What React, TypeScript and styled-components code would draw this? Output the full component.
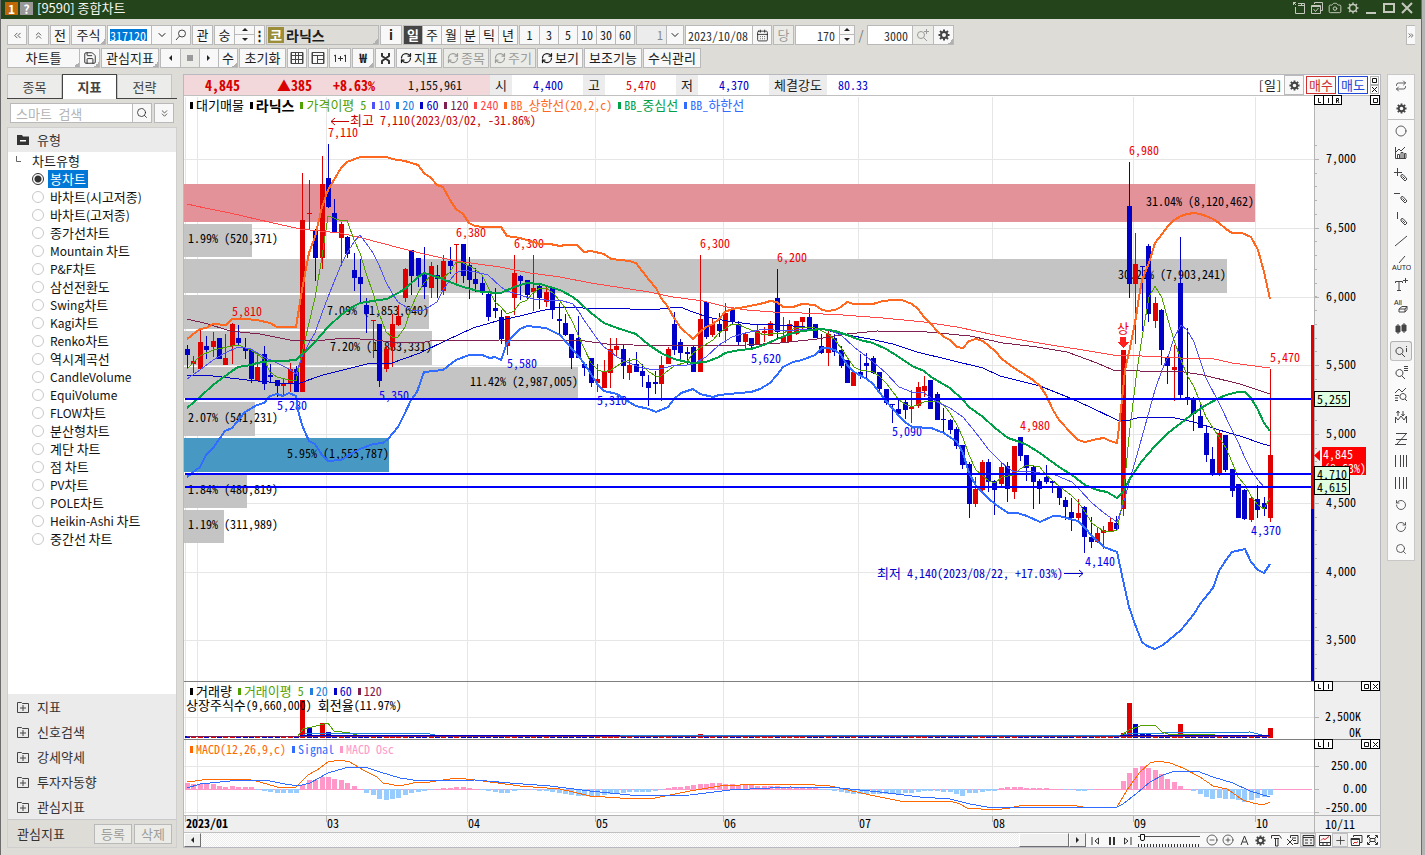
import React from "react";
import styled, { createGlobalStyle, css } from "styled-components";
import {
  ChevronDown,
  ChevronsDown,
  ChevronsLeft,
  ChevronsRight,
  ChevronsUp,
  Search,
  Save,
  RefreshCw,
  Repeat,
  CalendarDays,
  Circle,
  Camera,
  RotateCcw,
  RotateCw,
  CirclePlus,
  CircleMinus,
  Plus,
} from "lucide-react";

const UI_FONT = `"Noto Sans CJK KR", "Liberation Sans", sans-serif`;

const Global = createGlobalStyle`
  * { box-sizing: border-box; }
  body { margin: 0; background: #dddcd6; font-family: ${UI_FONT}; font-size: 13px; line-height: 16px; color: #1c1c1c; }
  button, input, select { font: inherit; color: inherit; margin: 0; padding: 0; }
`;

/* ---------- half width text ---------- */

const half = css`
  font-size: 12px;
  font-feature-settings: "hwid";
`;
const HalfSpan = styled.span`
  ${half}
  white-space: pre;
`;
const HalfTspan = styled.tspan`
  ${half}
  white-space: pre;
`;
const LatinSpan = styled.span`
  font-size: 12px;
  white-space: pre;
`;

const runs = (text: string) => text.split(/([가-힣]+)/).filter(Boolean);
const isHangul = (s: string) => /[가-힣]/.test(s);

const Mono = ({ children }: { children: string }) => (
  <>
    {runs(children).map((r, i) =>
      isHangul(r) ? <span key={i}>{r}</span> : <HalfSpan key={i}>{r}</HalfSpan>
    )}
  </>
);

const Mixed = ({ children }: { children: string }) => (
  <>
    {runs(children).map((r, i) =>
      isHangul(r) ? <span key={i}>{r}</span> : <LatinSpan key={i}>{r}</LatinSpan>
    )}
  </>
);

const ChartText = styled.text<{ $c?: string; $bold?: boolean }>`
  font-family: ${UI_FONT};
  font-size: 13px;
  font-weight: ${(p) => (p.$bold ? 700 : 400)};
  fill: ${(p) => p.$c || "#000"};
`;

type LabelProps = { x: number; y: number; c?: string; bold?: boolean; anchor?: "start" | "end"; children: string };
const Label = ({ x, y, c, bold, anchor = "start", children }: LabelProps) => (
  <ChartText x={x} y={y} $c={c} $bold={bold} textAnchor={anchor}>
    {runs(children).map((r, i) =>
      isHangul(r) ? <tspan key={i}>{r}</tspan> : <HalfTspan key={i}>{r}</HalfTspan>
    )}
  </ChartText>
);

/* ---------- window ---------- */

const Window = styled.div`
  min-height: 100vh;
  display: flex;
  flex-direction: column;
  background: #dddcd6;
  border-left: 1px solid #6c6c6c;
  border-right: 3px solid #b4b4b4;
  border-bottom: 1px solid #6c6c6c;
`;
const Inner = styled.div`
  flex: 1;
  display: flex;
  flex-direction: column;
  border-right: 1px solid #6c6c6c;
`;
const TitleBar = styled.header`
  height: 19px;
  display: flex;
  align-items: center;
  padding: 0 6px 3px 4px;
  background: #24441c;
  color: #f4f4f0;
  gap: 2px;
`;
const Tag = styled.span<{ $bg: string }>`
  width: 13px;
  height: 13px;
  line-height: 13px;
  font-size: 12px;
  font-weight: 700;
  text-align: center;
  background: ${(p) => p.$bg};
  color: #fff;
`;
const Title = styled.h1`
  margin: 0 auto 0 2px;
  font-size: 13px;
  line-height: 16px;
  font-weight: 400;
`;
const TitleBtn = styled.button`
  width: 16px;
  height: 16px;
  display: grid;
  place-items: center;
  border: 0;
  background: none;
  color: #c4c8bc;
`;

/* ---------- toolbar ---------- */

const Toolbars = styled.div`
  padding: 6px;
  display: flex;
  flex-direction: column;
  gap: 3px;
`;
const Bar = styled.div`
  display: flex;
  align-items: center;
  height: 20px;
  gap: 1px;
`;
const Group = styled.div`
  display: flex;
  > * + * {
    margin-left: -1px;
  }
`;
const Btn = styled.button<{ $w: number; $on?: boolean; $off?: boolean; $corner?: boolean; $bold?: boolean }>`
  width: ${(p) => p.$w}px;
  height: 20px;
  flex: none;
  display: flex;
  align-items: center;
  justify-content: center;
  gap: 2px;
  border: 1px solid #b9b9b9;
  white-space: nowrap;
  line-height: 16px;
  font-weight: ${(p) => (p.$on || p.$bold ? 700 : 400)};
  color: ${(p) => (p.$on ? "#fff" : p.$off ? "#9c9c98" : "#1c1c1c")};
  background: ${(p) => (p.$on ? "#444" : p.$off ? "#ebebe8" : "#f8f8f8")};
  ${(p) =>
    p.$corner &&
    css`
      background: linear-gradient(135deg, transparent 50%, #b0b0b0 50%) right bottom / 5px 5px no-repeat, #f8f8f8;
    `}
`;
const Field = styled.input<{ $w: number; $right?: boolean }>`
  width: ${(p) => p.$w}px;
  height: 20px;
  ${half}
  border: 1px solid #b9b9b9;
  border-radius: 0;
  padding: 0 4px 0 2px;
  background: #fff;
  color: #333;
  text-align: ${(p) => (p.$right ? "right" : "left")};
`;
const CodeField = styled(Field)`
  background: linear-gradient(#0078d7, #0078d7) 2px 3px / 37px 12px no-repeat, #fff;
  color: #fff;
`;
const CountSelect = styled.select`
  width: 31px;
  height: 20px;
  appearance: none;
  border: 1px solid #b9b9b9;
  border-radius: 0;
  background: #ececec;
  color: #888;
  padding: 0 3px 0 20px;
  ${half}
`;
const Slash = styled.span`
  width: 10px;
  text-align: center;
  color: #777;
`;
const StockName = styled.button`
  width: 113px;
  height: 20px;
  display: flex;
  align-items: center;
  gap: 2px;
  padding-left: 1px;
  border: 1px solid #b9b9b9;
  font-size: 14px;
  font-weight: 700;
  background: linear-gradient(135deg, transparent 50%, #b0b0b0 50%) right bottom / 5px 5px no-repeat, #dddcd6;
`;
const Market = styled.span`
  width: 16px;
  height: 16px;
  line-height: 16px;
  font-size: 13px;
  text-align: center;
  color: #fff;
  background: #9c8e38;
`;
const Spin = styled.div<{ $w: number }>`
  width: ${(p) => p.$w}px;
  height: 20px;
  display: flex;
  flex-direction: column;
`;
const SpinBtn = styled.button`
  height: 10px;
  display: grid;
  place-items: center;
  border: 1px solid #b9b9b9;
  background: #f8f8f8;
  & + & {
    border-top: 0;
  }
`;
const MoreBtn = styled(Btn)`
  margin-left: auto;
  border-right: 0;
`;

const Tri = ({ dir }: { dir: "up" | "down" | "left" | "right" }) => {
  const d = { up: "M0 4L3 1L6 4Z", down: "M0 1L3 4L6 1Z", left: "M4 0L1 3L4 6Z", right: "M1 0L4 3L1 6Z" }[dir];
  return (
    <svg width="6" height="6" fill="#222" aria-hidden="true">
      <path d={d} />
    </svg>
  );
};
const Gear = ({ s = 12, c = "#444", thin }: { s?: number; c?: string; thin?: boolean }) => (
  <svg width={s} height={s} viewBox="0 0 12 12" aria-hidden="true" fill="none" stroke={c}>
    <circle cx="6" cy="6" r={thin ? 3.5 : 3} strokeWidth={thin ? 1.5 : 2} />
    <path
      strokeWidth={thin ? 1.5 : 2}
      d="M6 0.500V2.500M6 9.500V11.500M0.500 6H2.500M9.500 6H11.500M2 2L3.400 3.400M8.600 8.600L10 10M10 2L8.600 3.400M3.400 8.600L2 10"
    />
  </svg>
);
const SpinPair = ({ w }: { w: number }) => (
  <Spin $w={w}>
    <SpinBtn aria-label="증가">
      <Tri dir="up" />
    </SpinBtn>
    <SpinBtn aria-label="감소">
      <Tri dir="down" />
    </SpinBtn>
  </Spin>
);
const strokeIcon = (d: string, size = 13, color = "#333", width = 1) => (
  <svg width={size} height={size} fill="none" stroke={color} strokeWidth={width} aria-hidden="true">
    <path d={d} />
  </svg>
);

const MainToolbar = () => (
  <Bar>
    <Btn $w={20} aria-label="이전"><ChevronsLeft size={11} strokeWidth={1.5} /></Btn>
    <Btn $w={21} aria-label="위로"><ChevronsUp size={11} strokeWidth={1.5} /></Btn>
    <Btn $w={20}>전</Btn>
    <Btn $w={35} $corner>주식</Btn>
    <Group>
      <CodeField $w={45} aria-label="종목코드" defaultValue="317120" />
      <Btn $w={21} aria-label="종목 목록"><ChevronDown size={12} /></Btn>
      <Btn $w={20} aria-label="종목 검색">
        <svg width="12" height="12" fill="none" stroke="#444" aria-hidden="true">
          <circle cx="7" cy="4.500" r="3.500" />
          <path d="M4.500 7L1 11" />
        </svg>
      </Btn>
    </Group>
    <Btn $w={21}>관</Btn>
    <Group>
      <Btn $w={21}>숭</Btn>
      <SpinPair w={21} />
      <Btn $w={11} $bold>⋮</Btn>
    </Group>
    <StockName>
      <Market>코</Market>라닉스
    </StockName>
    <Btn $w={22} $bold>i</Btn>
    <Group>
      {["일", "주", "월", "분", "틱", "년"].map((t, i) => (
        <Btn key={t} $w={20} $on={i === 0}>{t}</Btn>
      ))}
    </Group>
    <Group>
      {["1", "3", "5", "10", "30", "60"].map((t, i) => (
        <Btn key={t} $w={i === 0 ? 21 : 20}><Mono>{t}</Mono></Btn>
      ))}
    </Group>
    <Group>
      <CountSelect aria-label="주기 값" defaultValue="1"><option>1</option></CountSelect>
      <Btn $w={18} aria-label="주기 값 펼치기"><ChevronDown size={12} /></Btn>
    </Group>
    <Group>
      <Field $w={68} aria-label="기준일" defaultValue="2023/10/08" />
      <Btn $w={20} aria-label="달력"><CalendarDays size={13} strokeWidth={1.5} /></Btn>
    </Group>
    <Btn $w={21} $off>당</Btn>
    <Group>
      <Field $w={45} $right aria-label="표시 개수" defaultValue="170" />
      <SpinPair w={16} />
    </Group>
    <Slash>/</Slash>
    <Group>
      <Field $w={46} $right aria-label="전체 개수" defaultValue="3000" />
      <Btn $w={22} $off aria-label="조회">
        <svg width="14" height="14" fill="none" stroke="#999" aria-hidden="true">
          <circle cx="5" cy="7" r="3.500" />
          <path d="M7.500 9.500L11 13M8 3.500H13M10.500 1V6" />
        </svg>
      </Btn>
      <Btn $w={21} $corner aria-label="설정"><Gear /></Btn>
    </Group>
    <MoreBtn $w={9} aria-label="더보기"><ChevronsRight size={9} /></MoreBtn>
  </Bar>
);

const Cycle = () => <RefreshCw size={12} strokeWidth={2.5} />;

const ChartToolbar = () => (
  <Bar>
    <Group>
      <Btn $w={73} $corner>차트틀</Btn>
      <Btn $w={21} $corner aria-label="저장"><Save size={14} strokeWidth={1.5} /></Btn>
    </Group>
    <Btn $w={58} $corner>관심지표</Btn>
    <Group>
      <Btn $w={21} aria-label="뒤로"><Tri dir="left" /></Btn>
      <Btn $w={20} $off aria-label="정지">
        <svg width="6" height="6" fill="#999" aria-hidden="true"><path d="M0 0H6V6H0Z" /></svg>
      </Btn>
      <Btn $w={20} aria-label="앞으로"><Tri dir="right" /></Btn>
      <Btn $w={20} $corner>수</Btn>
    </Group>
    <Btn $w={47}>초기화</Btn>
    <Btn $w={20} aria-label="표">
      {strokeIcon("M1 1.500H13V12.500H1ZM1 4.500H13M1 8.500H13M1.500 1V13M5.500 1.500V12.500M8.500 1.500V12.500M12.500 1V13", 14, "#444")}
    </Btn>
    <Btn $w={20} aria-label="분할">
      {strokeIcon("M1 1.500H13V12.500H1ZM1 4.500H13M1.500 1V13M12.500 1V13M6.500 4.500V12.500M6.500 8.500H12.500", 14, "#444")}
    </Btn>
    <Btn $w={22} aria-label="추가 분할">
      {strokeIcon("M1 5L2.500 4V11M11 5L12.500 4V11M5 7.500H10M7.500 5V10", 14)}
    </Btn>
    <Btn $w={22} $corner $bold>₩</Btn>
    <Btn $w={20} aria-label="도구">
      {strokeIcon("M3 1V4L10 9V12M10 1V4L3 9V12M5 6.500H8", 13, "#333", 2)}
    </Btn>
    <Btn $w={46}><Cycle />지표</Btn>
    <Btn $w={46} $off><Cycle />종목</Btn>
    <Btn $w={46} $off><Cycle />주기</Btn>
    <Btn $w={46}><Cycle />보기</Btn>
    <Btn $w={58}>보조기능</Btn>
    <Btn $w={58}>수식관리</Btn>
  </Bar>
);

/* ---------- side panel ---------- */

const Body = styled.div`
  flex: 1;
  display: grid;
  grid-template-columns: 170px minmax(0, 1fr) 28px;
  align-items: start;
  gap: 6px;
  padding: 0 6px 7px;
`;
const Side = styled.aside`
  align-self: stretch;
  display: flex;
  flex-direction: column;
`;
const Tabs = styled.div`
  display: flex;
  height: 25px;
  border-bottom: 1px solid #444;
`;
const Tab = styled.button<{ $on?: boolean }>`
  width: 55px;
  height: ${(p) => (p.$on ? 25 : 24)}px;
  border: 1px solid ${(p) => (p.$on ? "#444" : "#c4c4c4")};
  border-bottom: 0;
  background: ${(p) => (p.$on ? "#fff" : "#ececea")};
  font-weight: ${(p) => (p.$on ? 700 : 400)};
  color: #444;
`;
const SearchRow = styled.div`
  display: flex;
  height: 28px;
  padding: 4px 3px 4px 3px;
`;
const SearchField = styled(Field)`
  flex: 1;
  min-width: 0;
  padding-left: 5px;
  font-size: 13px;
  &::placeholder {
    color: #b4b4b4;
    opacity: 1;
  }
`;
const SearchBtn = styled(Btn)`
  margin-left: -1px;
`;
const FoldBtn = styled(Btn)`
  margin-left: 2px;
`;
const TreePanel = styled.div`
  flex: 1;
  display: flex;
  flex-direction: column;
  border: 1px solid #cfcfcf;
  background: #fff;
`;
const SectionBtn = styled.button<{ $open?: boolean }>`
  height: ${(p) => (p.$open ? 24 : 25)}px;
  display: flex;
  align-items: center;
  gap: 8px;
  padding: 0 9px;
  border: 0;
  background: #ebebeb;
  color: #333;
`;
const Tree = styled.fieldset`
  flex: 1;
  margin: 0;
  border: 0;
  padding: 0 0 0 24px;
`;
const TreeHead = styled.legend`
  height: 18px;
  line-height: 18px;
  margin-left: -16px;
  padding: 0;
  display: flex;
  gap: 11px;
`;
const Item = styled.label`
  height: 18px;
  display: flex;
  align-items: center;
  gap: 4px;
`;
const Radio = styled.input`
  appearance: none;
  width: 12px;
  height: 12px;
  border: 1px solid #c8c8c8;
  border-radius: 50%;
  background: #fff;
  &:checked {
    border-color: #333;
    background: radial-gradient(#333 0 3px, #fff 4px);
  }
`;
const ItemText = styled.span<{ $on?: boolean }>`
  padding: 0 2px;
  line-height: 18px;
  white-space: pre;
  color: ${(p) => (p.$on ? "#fff" : "#111")};
  background: ${(p) => (p.$on ? "#0078d7" : "none")};
`;
const SideFoot = styled.div`
  height: 28px;
  display: flex;
  align-items: center;
  gap: 2px;
  padding: 0 4px 0 9px;
  border-top: 1px solid #c8c8c8;
  background: #dddcd6;
  color: #333;
  > span {
    margin-right: auto;
  }
`;

const chartTypes = [
  "봉차트", "바차트(시고저종)", "바차트(고저종)", "종가선차트", "Mountain 차트", "P&F차트", "삼선전환도",
  "Swing차트", "Kagi차트", "Renko차트", "역시계곡선", "CandleVolume", "EquiVolume", "FLOW차트",
  "분산형차트", "계단 차트", "점 차트", "PV차트", "POLE차트", "Heikin-Ashi 차트", "중간선 차트",
];

const FolderIcon = ({ open }: { open?: boolean }) => (
  <svg width="12" height="12" fill={open ? "#333" : "none"} stroke={open ? "none" : "#444"} aria-hidden="true">
    <path d={open ? "M0 1H5L6 2.500H12V11H0Z" : "M0.500 1.500H4.500L5.500 2.500H11.500V11.500H0.500Z"} />
    <path d={open ? "M3 6H9V7.500H3Z" : "M3 7H9M6 4V10"} fill={open ? "#fff" : "none"} />
  </svg>
);

const SidePanel = () => (
  <Side>
    <Tabs role="tablist">
      <Tab role="tab">종목</Tab>
      <Tab role="tab" aria-selected="true" $on>지표</Tab>
      <Tab role="tab">전략</Tab>
    </Tabs>
    <SearchRow>
      <SearchField $w={120} aria-label="스마트 검색" placeholder="스마트 검색" />
      <SearchBtn $w={20} aria-label="검색"><Search size={12} strokeWidth={1.5} /></SearchBtn>
      <FoldBtn $w={20} aria-label="접기"><ChevronsDown size={11} strokeWidth={1.5} /></FoldBtn>
    </SearchRow>
    <TreePanel>
      <SectionBtn $open><FolderIcon open />유형</SectionBtn>
      <Tree>
        <TreeHead>
          <svg width="5" height="10" fill="none" stroke="#666" aria-hidden="true"><path d="M0.500 4V9.500H5" /></svg>
          차트유형
        </TreeHead>
        {chartTypes.map((t, i) => (
          <Item key={t}>
            <Radio type="radio" name="chartType" defaultChecked={i === 0} />
            <ItemText $on={i === 0}><Mixed>{t}</Mixed></ItemText>
          </Item>
        ))}
      </Tree>
      {["지표", "신호검색", "강세약세", "투자자동향", "관심지표"].map((t) => (
        <SectionBtn key={t}><FolderIcon />{t}</SectionBtn>
      ))}
      <SideFoot>
        <span>관심지표</span>
        <Btn $w={38} $off>등록</Btn>
        <Btn $w={38} $off>삭제</Btn>
      </SideFoot>
    </TreePanel>
  </Side>
);

/* ---------- chart data ---------- */

const RED = "#e00000";
const BLUE = "#0000c8";

// high, low, body top, body bottom on the price pane; a leading minus marks a falling candle
const candles: number[][] = [
  [-345,368,349,355],[356,373,361,364],[330,369,342,369],[-336,359,346,350],[332,357,341,347],[-338,359,338,359],
  [334,365,358,365],[323,364,324,346],[-325,346,338,343],[-338,359,348,351],[-350,383,350,379],[353,381,367,381],
  [-346,390,354,384],[-364,382,375,377],[-380,397,380,386],[378,395,383,386],[363,392,369,383],[-366,392,369,392],
  [173,392,220,392],[180,230,213,214],[-229,281,231,258],[156,269,184,258],[-144,208,178,207],[-199,233,213,233],
  [222,266,224,238],[-236,258,237,254],[-253,291,270,278],[-259,302,277,284],[-298,333,305,314],[320,358,320,321],
  [-324,387,324,381],[346,372,349,369],[314,367,324,347],[305,326,316,325],[268,302,269,298],[-250,295,250,276],
  [-258,287,258,276],[-247,299,275,287],[262,298,266,288],[-265,298,275,279],[255,295,261,291],[-247,274,261,266],
  [244,283,244,245],[-244,283,244,276],[-257,299,265,280],[-268,292,279,284],[-275,295,283,293],[-293,321,294,317],
  [-288,318,308,311],[-310,344,317,339],[316,355,316,346],[255,315,273,298],[-275,300,276,281],[-280,299,280,295],
  [255,311,288,292],[-285,309,286,298],[287,307,292,302],[-288,319,288,310],[-303,335,319,321],[-314,336,323,335],
  [-334,369,334,358],[-316,358,338,358],[-364,376,364,368],[-358,387,358,383],[364,392,379,383],[360,388,372,388],
  [338,388,349,373],[338,357,346,350],[-345,379,349,366],[358,380,365,373],[-352,372,364,372],[-364,387,371,376],
  [-375,406,382,388],[-371,394,382,384],[356,401,365,384],[347,364,349,364],[-312,355,324,350],[-339,359,342,353],
  [-347,365,352,354],[-346,372,347,372],[255,372,319,372],[-301,339,302,337],[319,337,324,335],[-313,337,324,331],
  [303,343,313,331],[-307,324,310,321],[-321,345,324,342],[332,348,334,342],[-338,349,338,346],[325,345,331,345],
  [327,342,331,333],[321,336,323,336],[-269,338,298,332],[317,343,336,342],[320,342,324,342],[321,335,321,334],
  [317,331,317,322],[-308,329,317,329],[-324,338,324,338],[-334,354,346,353],[330,366,334,353],[-334,356,338,352],
  [-346,368,350,366],[-360,383,360,383],[371,386,372,386],[-354,379,372,375],[-353,379,363,366],[-356,374,358,373],
  [-372,392,372,389],[-389,405,389,403],[-404,423,404,405],[-398,417,409,414],[-400,419,402,410],[390,423,407,409],
  [382,408,387,406],[376,397,386,391],[-380,409,380,409],[-392,420,394,420],[-408,432,419,420],[-419,434,420,430],
  [-427,449,429,446],[-445,469,445,465],[-462,518,464,504],[477,507,489,504],[460,491,462,490],[-459,492,462,482],
  [-480,515,481,490],[463,486,467,484],[-462,502,466,489],[446,499,446,492],[-437,461,437,456],[-455,481,455,468],
  [-466,509,467,482],[-479,504,481,489],[-465,484,477,482],[-480,493,481,483],[-487,505,487,498],[-497,520,500,507],
  [-498,531,512,518],[499,520,513,518],[-506,553,507,537],[-517,548,537,542],[528,543,533,542],[526,549,530,533],
  [518,531,522,531],[-516,530,523,529],[350,516,350,509],[-162,298,206,284],[233,344,264,284],[-266,331,266,267],
  [-244,322,246,314],[297,328,303,321],[-309,365,310,350],[-356,384,358,366],[345,401,367,370],[-237,398,283,395],
  [-328,405,397,399],[-397,431,398,414],[-404,428,416,428],[-425,462,433,455],[-447,476,459,475],[430,476,433,474],
  [-435,472,435,470],[-469,497,469,491],[-484,518,484,518],[-489,520,490,519],[496,522,498,520],[-485,518,499,510],
  [-497,516,503,509],[369,522,455,518],
];
const STEP = 1083 / 169;
const barX = (i: number) => Math.round(185 + i * STEP);

const lines: { c: string; w: number; p: string }[] = [
  { c: "#ff4848", w: 1, p: "187,204 205,208 230,213 260,220 300,229 340,233 362,238 400,248 424,254 456,261 500,267 530,273 560,277 591,283 623,288 649,292 673,297 703,301 727,307 747,310 773,312 802,313 843,315 883,318 924,322 957,327 995,335 1027,341 1057,346 1083,350 1113,355 1142,356 1181,358 1210,358 1232,363 1270,368" },
  { c: "#802050", w: 1, p: "187,319 208,324 230,331 260,334 290,340 315,341 345,338 375,340 400,343 425,342 435,340 460,341 500,340 530,341 560,340 585,341 607,344 633,345 690,346 747,345 780,343 817,339 847,334 877,331 927,332 970,336 1003,343 1037,347 1067,352 1097,363 1113,370 1140,371 1177,371 1203,375 1240,384 1270,394" },
  { c: BLUE, w: 1, p: "187,375 213,376 247,380 280,383 300,383 323,375 347,369 367,364 392,363 420,353 447,340 473,328 497,321 520,316 540,311 560,307 583,308 610,308 650,310 680,307 693,312 707,317 727,321 750,324 767,324 793,326 817,328 847,335 870,339 893,344 917,352 950,360 983,368 1000,376 1040,386 1070,398 1090,407 1117,420 1130,420 1140,417 1170,417 1194,422 1219,430 1243,437 1260,443 1270,446" },
  { c: "#50a000", w: 1, p: "187,369 200,356 213,350 232,346 238,345 251,350 257,354 264,359 270,372 277,377 289,380 296,381 302,353 309,323 315,298 322,257 328,216 334,218 341,221 347,220 354,240 360,253 366,273 373,293 379,313 386,332 392,337 398,337 405,327 411,308 418,293 424,283 431,275 443,278 450,272 456,262 463,263 475,269 482,275 488,287 495,302 501,307 507,314 514,311 520,303 527,300 533,293 540,288 546,288 553,293 560,301 565,308 573,323 579,337 584,348 591,363 598,370 604,372 611,370 623,362 636,359 642,365 649,372 656,376 661,376 674,366 687,362 693,353 700,348 713,340 719,333 732,324 739,325 751,330 764,335 777,333 783,333 796,328 809,327 815,328 822,331 828,334 835,340 841,348 847,357 854,367 860,370 873,372 879,376 886,383 893,392 899,400 905,404 912,407 924,402 937,401 944,405 950,413 957,425 963,438 969,455 976,470 983,476 989,481 995,483 1002,477 1014,475 1020,469 1027,465 1040,467 1046,475 1059,486 1072,496 1078,502 1085,512 1092,523 1097,527 1104,531 1110,532 1117,530 1123,500 1129,437 1137,370 1142,338 1149,297 1155,286 1162,298 1168,320 1174,340 1181,360 1187,375 1194,387 1200,402 1206,417 1213,428 1219,437 1226,448 1232,462 1238,477 1245,485 1251,496 1258,505 1264,509 1270,498" },
  { c: "#5050f8", w: 1, p: "187,379 200,370 213,360 225,353 238,347 251,349 264,357 277,363 289,369 296,374 302,357 309,343 315,333 322,313 328,297 334,282 341,265 347,253 354,242 360,235 366,243 373,253 379,265 386,282 392,293 398,302 411,310 424,310 437,302 443,290 450,280 456,273 463,270 475,272 488,275 501,287 507,291 520,295 533,299 546,300 560,300 573,304 579,312 584,320 591,330 598,340 604,347 611,352 617,357 629,363 642,368 656,370 668,367 674,365 681,366 693,364 706,357 719,345 732,337 745,333 764,329 783,331 809,329 828,330 841,335 854,347 867,357 879,367 886,373 899,387 912,392 924,393 937,402 950,408 963,417 976,433 989,450 1002,463 1014,472 1027,471 1040,473 1053,474 1067,480 1072,482 1078,488 1092,503 1104,513 1117,522 1123,505 1129,483 1142,437 1155,390 1162,370 1168,357 1174,338 1181,325 1187,330 1194,342 1200,360 1206,378 1219,403 1232,430 1238,442 1245,458 1251,470 1258,480 1264,487" },
  { c: "#00a048", w: 2, p: "187,408 200,397 213,385 232,371 238,367 251,365 257,363 270,361 283,361 296,360 309,348 315,342 328,327 341,315 354,306 360,303 379,300 387,299 398,293 405,289 418,277 424,273 437,277 450,282 463,287 482,292 501,293 514,287 527,283 540,284 560,290 573,297 579,302 591,313 604,323 617,328 636,334 649,345 661,353 674,359 687,362 693,363 706,362 719,357 725,353 739,350 751,349 764,345 777,339 790,334 802,331 822,329 835,331 847,335 860,340 873,343 886,349 899,357 912,366 924,371 931,377 950,388 963,400 969,407 983,417 995,428 1008,438 1020,442 1027,445 1040,453 1059,467 1072,475 1085,485 1097,490 1107,492 1117,498 1123,492 1129,480 1142,461 1155,446 1168,433 1181,423 1194,413 1206,405 1219,398 1226,395 1238,392 1245,392 1251,398 1258,410 1264,423 1270,431" },
  { c: "#ff6820", w: 2, p: "187,339 200,329 206,328 213,324 226,325 232,319 245,319 257,320 270,323 277,327 296,327 302,290 309,253 315,237 322,207 328,190 341,168 347,162 360,157 387,157 392,159 405,161 418,165 424,173 431,178 437,185 443,187 450,200 456,209 463,214 469,223 475,226 483,227 501,227 507,236 520,238 533,242 540,244 550,244 560,246 565,245 577,245 584,252 591,251 604,254 611,259 629,261 636,263 649,280 656,288 661,298 668,307 674,318 681,328 693,339 700,332 706,327 713,324 719,319 725,312 732,309 745,307 764,303 770,301 777,302 783,307 793,307 802,304 815,305 822,310 828,311 835,310 841,307 847,302 854,304 873,304 883,301 893,300 902,300 912,304 918,309 924,317 931,324 937,331 944,337 950,340 957,347 963,348 969,341 976,339 983,341 989,346 995,351 1002,359 1014,368 1027,376 1033,380 1040,386 1046,395 1053,410 1059,420 1072,434 1078,440 1085,442 1097,439 1104,438 1110,441 1117,443 1119,427 1123,390 1125,370 1131,343 1136,317 1139,297 1142,280 1149,263 1155,243 1162,234 1168,226 1174,220 1181,216 1187,214 1194,213 1200,214 1206,216 1213,219 1219,223 1226,229 1232,233 1242,233 1251,237 1258,250 1264,272 1270,299" },
  { c: "#2f6cff", w: 2, p: "187,477 200,467 206,455 213,448 225,431 232,428 245,412 257,405 264,403 270,396 277,394 283,396 289,393 296,396 298,410 302,425 309,441 315,444 322,455 328,461 341,460 354,452 360,449 373,444 383,443 388,439 398,427 405,413 411,400 417,392 424,372 443,370 456,360 469,355 482,355 490,358 495,357 501,360 507,343 514,335 520,329 527,326 546,328 560,335 573,350 579,357 584,363 591,374 598,385 604,391 617,394 629,402 636,406 649,409 656,412 668,407 674,399 681,393 693,389 700,394 713,397 719,395 739,393 751,392 760,389 770,383 777,375 783,367 793,362 802,360 815,355 822,348 828,348 835,350 841,355 847,365 854,372 867,379 873,384 886,401 899,416 905,422 912,427 931,428 944,433 957,442 963,453 969,473 976,486 989,499 995,504 1008,513 1017,513 1027,516 1040,522 1053,516 1059,516 1078,521 1085,528 1092,536 1104,547 1117,552 1123,580 1129,607 1136,627 1142,642 1147,646 1155,649 1163,645 1181,630 1194,614 1200,604 1213,588 1219,571 1226,560 1232,552 1245,549 1251,562 1258,570 1264,573 1270,564" },
];

const macdLines = [
  { c: "#ff6800", p: "187,782 210,779 247,779 260,782 277,787 295,788 300,783 308,775 317,770 328,762 340,760 350,762 363,770 377,777 383,783 400,786 413,783 430,782 443,780 457,778 475,780 520,786 560,789 590,796 620,798 650,799 690,791 720,786 760,784 800,784 830,786 870,795 900,801 930,802 950,801 960,804 967,808 995,810 1010,808 1023,805 1070,805 1090,808 1117,807 1127,790 1140,772 1150,763 1158,761 1170,763 1183,768 1200,777 1213,786 1227,789 1243,800 1253,803 1263,805 1270,802" },
  { c: "#2f6cff", p: "187,788 200,784 220,782 240,780 265,780 285,784 298,786 310,783 328,773 345,768 365,767 380,772 400,778 420,781 475,780 510,783 550,786 590,791 640,796 690,795 730,790 790,787 840,788 880,792 920,797 950,799 970,804 987,807 1023,807 1117,807 1123,804 1137,793 1150,782 1163,775 1175,771 1197,771 1213,777 1233,783 1250,791 1270,797" },
];
const oscillator = [
  6,5,5,5,5,3,2,3,2,2,2,-1,-2,-3,-4,-4,-4,-4,4,9,9,12,12,10,9,6,3,0,-4,-6,-10,-11,-10,-9,-6,-4,-3,-2,-1,0,1,1,2,2,1,
  0,-1,-2,-3,-4,-4,-2,-1,-1,-1,-2,-2,-3,-4,-5,-6,-7,-7,-8,-7,-6,-5,-4,-4,-3,-3,-3,-3,-2,-1,1,2,2,3,4,5,5,6,6,5,5,4,4,
  4,3,3,3,3,2,2,2,2,1,1,-1,-1,-2,-3,-4,-5,-5,-5,-5,-5,-5,-5,-5,-4,-4,-3,-2,-2,-2,-3,-3,-5,-7,-4,-4,-3,-2,-2,1,2,2,2,
  1,1,1,1,0,0,-1,-1,-2,-2,-1,8,16,21,23,21,19,15,10,7,3,0,-2,-5,-8,-10,-9,-10,-10,-11,-13,-11,-9,-8,-6,
];
// the last 24 values belong to the newest candles, so the series is aligned to the right
const oscillatorAt = (i: number) =>
  i >= 146 ? oscillator[oscillator.length - 170 + i] : i < oscillator.length - 24 ? oscillator[i] : 0;

const tallVolume: Record<number, [number, string]> = {
  18: [38, RED], 19: [10, BLUE], 20: [3, BLUE], 21: [15, RED], 22: [6, BLUE], 80: [4, RED],
  146: [5, RED], 147: [35, RED], 148: [14, BLUE], 149: [5, BLUE], 150: [4, BLUE], 155: [14, RED], 156: [4, BLUE], 169: [10, RED],
};
const volumeLines = [
  { c: "#50a000", p: "187,736 298,736 303,729 312,727 328,723 334,731 350,733 360,736 1120,736 1129,730 1140,726 1155,725 1162,732 1168,734 1210,734 1220,736 1270,735" },
  { c: "#2080e0", p: "187,736 300,736 308,733 425,733 435,735 1120,736 1128,734 1165,733 1250,732 1262,735 1270,735" },
  { c: BLUE, p: "187,736 300,736 500,735 620,736 1120,736 1140,735 1270,735" },
  { c: "#802050", p: "187,736 1270,736" },
];

const profile: [number, number, number, string, string, number, number][] = [
  [184, 38, 1255, "#e4929a", "31.04% (8,120,462)", 1254, 206],
  [224, 33, 252, "#c4c4c4", "1.99% (520,371)", 278, 243],
  [259, 34, 1227, "#c4c4c4", "30.21% (7,903,241)", 1226, 279],
  [295, 34, 429, "#c4c4c4", "7.09% (1,853,640)", 429, 315],
  [331, 34, 432, "#c4c4c4", "7.20% (1,883,331)", 432, 351],
  [367, 31, 578, "#c4c4c4", "11.42% (2,987,005)", 578, 386],
  [402, 34, 255, "#c4c4c4", "2.07% (541,231)", 278, 422],
  [438, 34, 389, "#4898c4", "5.95% (1,555,787)", 389, 458],
  [475, 33, 247, "#c4c4c4", "1.84% (480,819)", 278, 494],
  [510, 33, 224, "#c4c4c4", "1.19% (311,989)", 278, 529],
];
const priceTags: [string, number, number, string][] = [
  ["7,110", 328, 137, "#f00000"], ["5,810", 232, 316, "#f00000"], ["5,280", 277, 410, "#0000f0"],
  ["6,380", 456, 237, "#f00000"], ["6,300", 514, 248, "#f00000"], ["5,580", 507, 368, "#0000f0"],
  ["5,350", 379, 400, "#0000f0"], ["5,310", 597, 405, "#0000f0"], ["6,300", 700, 248, "#f00000"],
  ["6,200", 777, 262, "#f00000"], ["5,620", 751, 363, "#0000f0"], ["5,090", 892, 436, "#0000f0"],
  ["4,980", 1020, 430, "#f00000"], ["4,140", 1085, 566, "#0000f0"], ["6,980", 1129, 155, "#f00000"],
  ["5,470", 1270, 362, "#f00000"],
];
const gridX = [185, 197, 326, 467, 595, 723, 858, 992, 1133, 1255];
const gridY = [159, 228, 297, 365, 434, 503, 572, 640];
const priceAxis = ["7,000", "6,500", "6,000", "5,500", "5,000", "4,500", "4,000", "3,500"];
const months: [string, number][] = [
  ["03", 327], ["04", 468], ["05", 596], ["06", 724], ["07", 859], ["08", 993], ["09", 1134], ["10", 1256],
];

/* ---------- chart ---------- */

const ChartPanel = styled.main`
  border: 1px solid #b8b8c0;
  background: #fff;
`;
const QuoteRow = styled.div`
  height: 21px;
  display: flex;
  align-items: center;
  border-bottom: 1px solid #c0c0c0;
`;
const Quote = styled.span<{ $w: number; $c?: string; $bold?: boolean; $pad?: number }>`
  width: ${(p) => p.$w}px;
  height: 20px;
  line-height: 20px;
  padding-right: ${(p) => p.$pad || 0}px;
  text-align: right;
  white-space: nowrap;
  font-feature-settings: "hwid";
  font-size: ${(p) => (p.$bold ? 14 : 12)}px;
  font-weight: ${(p) => (p.$bold ? 700 : 400)};
  color: ${(p) => p.$c || "#111"};
`;
const PinkQuotes = styled.div`
  display: flex;
  width: 306px;
  background: #f2d8da;
`;
const QuoteName = styled.span<{ $w: number }>`
  width: ${(p) => p.$w}px;
  height: 20px;
  line-height: 20px;
  text-align: center;
  background: #ececec;
`;
const QuoteTools = styled.div`
  margin-left: auto;
  display: flex;
  align-items: center;
  gap: 2px;
  padding-right: 1px;
`;
const TradeBtn = styled.button<{ $c: string }>`
  width: 30px;
  height: 18px;
  border: 1px solid ${(p) => p.$c};
  background: #fafafa;
  color: ${(p) => p.$c};
  line-height: 14px;
`;
const SmallBtns = styled.div`
  display: flex;
  flex-direction: column;
`;
const SmallBtn = styled.button`
  width: 9px;
  height: 9px;
  display: grid;
  place-items: center;
  border: 1px solid #b4b4b4;
  background: #fff;
`;
const Stage = styled.div`
  position: relative;
`;
const Drawing = styled.svg`
  display: block;
  width: 100%;
  height: auto;
`;
const Legend = styled.div<{ $top: number }>`
  position: absolute;
  left: 6px;
  top: ${(p) => p.$top}px;
  display: flex;
  gap: 6px;
  line-height: 16px;
`;
const Key = styled.span<{ $c: string; $bold?: boolean }>`
  display: flex;
  align-items: center;
  white-space: pre;
  color: ${(p) => p.$c};
  font-size: ${(p) => (p.$bold ? 14 : 13)}px;
  font-weight: ${(p) => (p.$bold ? 700 : 400)};
  &::before {
    content: "";
    width: 3px;
    height: 7px;
    margin-right: 3px;
    background: ${(p) => p.$c};
  }
`;
const PaneButtons = styled.div<{ $top: number }>`
  position: absolute;
  right: 0;
  top: ${(p) => p.$top}px;
  width: 66px;
  display: flex;
  justify-content: space-between;
  > div {
    display: flex;
  }
`;
const PaneBtn = styled.button`
  width: 10px;
  height: 10px;
  display: grid;
  place-items: center;
  border: 1px solid #000;
  background: #fff;
  & + & {
    margin-left: -1px;
  }
`;

const glyphs: Record<string, string> = {
  L: "M2.500 1V5.500H5",
  I: "M3.500 1V6",
  R: "M2.500 6V1.500H4.500V3.500H2.500M3.500 3.500L5 6",
  box: "M1.500 1.500H5.500V5.500H1.500Z",
  x: "M1 1L6 6M6 1L1 6",
};
const Tiny = ({ g }: { g: string }) => (
  <svg width="7" height="7" fill="none" stroke="#111" aria-hidden="true"><path d={glyphs[g]} /></svg>
);
const PaneTools = ({ top, left, right }: { top: number; left: string[]; right: string[] }) => (
  <PaneButtons $top={top}>
    <div>{left.map((g) => <PaneBtn key={g} aria-label={g}><Tiny g={g} /></PaneBtn>)}</div>
    <div>{right.map((g) => <PaneBtn key={g} aria-label={g}><Tiny g={g} /></PaneBtn>)}</div>
  </PaneButtons>
);

const AxisFlag = ({ y, text }: { y: number; text: string }) => (
  <g>
    <rect x="1314.500" y={y - 7.5} width="35" height="15" fill="#e0ffe0" stroke="#000" />
    <Label x={1317} y={y + 5}>{text}</Label>
  </g>
);

const ChartDrawing = () => (
  <Drawing viewBox="184 96 1196 737" role="img" aria-label="라닉스 일봉 차트">
    <g shapeRendering="crispEdges">
      <rect x="184" y="96" width="1130" height="719" fill="#fff" />
      {gridX.map((x) => (
        <path key={x} d={`M${x + 0.5} 97V814`} stroke="#e6e6e6" />
      ))}
      {gridY.concat([717, 766, 812]).map((y) => (
        <path key={y} d={`M184 ${y + 0.5}H1314`} stroke="#e6e6e6" />
      ))}
      {profile.map(([y, h, right, c]) => (
        <rect key={y} x="184" y={y} width={right - 184} height={h} fill={c} />
      ))}
    </g>
    {profile.map(([y, , , , t, tx, ty]) => (
      <Label key={y} x={tx} y={ty} anchor="end">{t}</Label>
    ))}
    {priceTags.map(([t, x, y, c]) => (
      <Label key={t + x} x={x} y={y} c={c}>{t}</Label>
    ))}
    <g shapeRendering="crispEdges">
      {candles.map(([h, l, t, b], i) => {
        const x = barX(i);
        const c = h < 0 ? BLUE : RED;
        return (
          <g key={i} fill={c}>
            <rect x={x + 2} y={Math.abs(h)} width="1" height={l - Math.abs(h)} />
            <rect x={x} y={t} width="5" height={b - t} />
          </g>
        );
      })}
      {lines.map((s, i) => (
        <polyline key={i} points={s.p} fill="none" stroke={s.c} strokeWidth={s.w} />
      ))}
      {[399, 474, 487].map((y) => (
        <rect key={y} x="185" y={y - 1} width="1129" height="2" fill="#0000f8" />
      ))}
      <rect x="1311" y="325" width="3" height="184" fill={RED} />
      <rect x="1311" y="509" width="3" height="172" fill={BLUE} />
      <path d="M1120 337H1126V342H1129L1123 348L1117 342H1120Z" fill="#ff2020" />
    </g>
    <Label x={1117} y={333} c="#f00000">상</Label>
    <Label x={1251} y={535} c="#0000f0">4,370</Label>
    <path d="M349 121.500H331M335 118L331 121.500L335 125" fill="none" stroke="#c80000" />
    <Label x={350} y={125} c="#c80000">최고 7,110(2023/03/02, -31.86%)</Label>
    <path d="M1064 573.500H1083M1079 570L1083 573.500L1079 577" fill="none" stroke={BLUE} />
    <Label x={877} y={578} c={BLUE}>최저 4,140(2023/08/22, +17.03%)</Label>

    <g shapeRendering="crispEdges">
      <rect x="184" y="681" width="1196" height="1" fill="#808080" />
      <rect x="184" y="739" width="1196" height="1" fill="#808080" />
      {candles.map(([h], i) => {
        const [tall, c] = tallVolume[i] || [2, h < 0 ? BLUE : RED];
        return <rect key={i} x={barX(i)} y={738 - tall} width="5" height={tall} fill={c} />;
      })}
      {volumeLines.map((s) => (
        <polyline key={s.c} points={s.p} fill="none" stroke={s.c} />
      ))}
      <rect x="185" y="789" width="1127" height="1" fill="#ff98c8" />
      {candles.map((_, i) => {
        const v = oscillatorAt(i);
        return (
          <rect
            key={i}
            x={barX(i)}
            y={v > 0 ? 789 - v : 789}
            width="5"
            height={Math.abs(v)}
            fill={v > 0 ? "#ff98c8" : "#98ccff"}
          />
        );
      })}
      {macdLines.map((s) => (
        <polyline key={s.c} points={s.p} fill="none" stroke={s.c} />
      ))}
    </g>
    <Label x={186} y={710}>상장주식수(9,660,000) 회전율(11.97%)</Label>

    <g shapeRendering="crispEdges">
      <rect x="1314" y="96" width="66" height="719" fill="#efefef" />
      <rect x="1314" y="96" width="1" height="737" fill="#b4b4b4" />
      <rect x="184" y="815" width="1196" height="17" fill="#efefef" />
      <rect x="184" y="815" width="1196" height="1" fill="#b4b4b4" />
      <rect x="184" y="832" width="1196" height="1" fill="#c0c0c0" />
      <rect x="1314" y="681" width="66" height="1" fill="#808080" />
      <rect x="1314" y="739" width="66" height="1" fill="#808080" />
      <rect x="1314" y="815" width="1" height="18" fill="#b4b4b4" />
      {Array.from({ length: 39 }, (_, i) => 145 + i * 13.76)
        .filter((y) => y < 678)
        .map((y) => (
          <rect key={y} x="1315" y={Math.round(y)} width="2" height="1" fill="#b4b4b4" />
        ))}
      {gridY.concat([717, 766, 789, 812]).map((y) => (
        <rect key={y} x="1315" y={y} width="4" height="1" fill="#b4b4b4" />
      ))}
      {gridX.map((x) => (
        <rect key={x} x={x} y="816" width="1" height="6" fill="#b4b4b4" />
      ))}
    </g>
    {priceAxis.map((t, i) => (
      <Label key={t} x={1356} y={gridY[i] + 4} anchor="end">{t}</Label>
    ))}
    <Label x={1361} y={721} anchor="end">2,500K</Label>
    <Label x={1361} y={737} anchor="end">0K</Label>
    <Label x={1367} y={770} anchor="end">250.00</Label>
    <Label x={1367} y={793} anchor="end">0.00</Label>
    <Label x={1367} y={812} anchor="end">-250.00</Label>
    <rect x="1322" y="447" width="44" height="28" fill="#ff0000" />
    <path d="M1314 455.500L1320 450V461Z" fill="#ff0000" />
    <Label x={1323} y={459} c="#fff">4,845</Label>
    <Label x={1324} y={473} c="#fff">(8.63%)</Label>
    <AxisFlag y={399} text="5,255" />
    <AxisFlag y={474} text="4,710" />
    <AxisFlag y={487} text="4,615" />
    <Label x={186} y={828} bold>2023/01</Label>
    {months.map(([t, x]) => (
      <Label key={t} x={x} y={828}>{t}</Label>
    ))}
    <Label x={1325} y={829}>10/11</Label>
  </Drawing>
);

const priceKeys: [string, string][] = [
  ["대기매물", "#000"], ["라닉스", "#000"], ["가격이평 5", "#50a000"], ["10", "#5050f8"], ["20", "#2080e0"],
  ["60", BLUE], ["120", "#802050"], ["240", "#ff4848"], ["BB_상한선(20,2,c)", "#ff6820"],
  ["BB_중심선", "#00a048"], ["BB_하한선", "#2f6cff"],
];

/* ---------- bottom row ---------- */

const BottomRow = styled.div`
  height: 14px;
  display: flex;
  background: #f8f8f8;
`;
const ScrollTrack = styled.div`
  flex: 1;
  display: flex;
  justify-content: flex-end;
  background: repeating-conic-gradient(#fff 0 25%, #ececec 0 50%) 0 0 / 2px 2px;
`;
const ScrollBtn = styled.button<{ $w: number }>`
  width: ${(p) => p.$w}px;
  height: 14px;
  display: grid;
  place-items: center;
  background: #efefef;
  border: 1px solid;
  border-color: #fff #707070 #707070 #fff;
`;
const IconCell = styled.button<{ $on?: boolean }>`
  width: 16px;
  height: 14px;
  display: grid;
  place-items: center;
  border: ${(p) => (p.$on ? "1px solid #c0c0c0" : "0")};
  background: ${(p) => (p.$on ? "#ececec" : "none")};
  color: #333;
`;
const Playback = styled.div`
  display: flex;
  width: 52px;
  padding-left: 1px;
`;
const Zoom = styled.input`
  appearance: none;
  width: 62px;
  height: 14px;
  margin-right: 4px;
  background:
    linear-gradient(#555, #555) 0 3px / 100% 1px no-repeat,
    repeating-linear-gradient(90deg, #333 0 1px, transparent 1px 3px) 0 bottom / 100% 3px no-repeat;
  &::-webkit-slider-thumb {
    appearance: none;
    width: 5px;
    height: 7px;
    border: 1px solid #111;
    border-radius: 0 0 2px 2px;
    background: #fff;
    margin-top: -5px;
  }
`;

const bottomIcons: [string, React.ReactNode, boolean?][] = [
  ["축소", <CircleMinus size={12} strokeWidth={1.5} />],
  ["확대", <CirclePlus size={12} strokeWidth={1.5} />],
  ["글자", strokeIcon("M3 11L6.500 2L10 11M4.500 8H8.500")],
  ["설정", <Gear s={11} />],
  ["도구", strokeIcon("M1.500 4.500V1.500H9.500L11.500 4.500M4 4.500H9M5.500 4.500V12M8 4.500V12H5.500")],
  ["내보내기", strokeIcon("M4.500 4V1.500H12V9.500H8M6 4H10M7 6.500H10M1 5L7 11M7 5L1 11")],
  ["정보창", strokeIcon("M1 1.500H12V11.500H1ZM1 3.500H12M3 6H6M3 9H6M8 6H10M8 9H10"), true],
  ["차트", <svg width="13" height="13" fill="none" stroke="#333" aria-hidden="true">
    <path d="M1.500 1.500H12.500V11.500H1.500ZM1 8.500H12M5 8.500V11M9 8.500V11" />
    <path d="M3 6.500L5 4.500L7 5.500L11 2.500" stroke="#d02020" />
  </svg>],
  ["십자선", <Plus size={13} strokeWidth={1.5} />, true],
  ["창", <svg width="13" height="13" fill="none" stroke="#333" aria-hidden="true">
    <path d="M3.500 3V1.500H12V8.500H10M1 4.500H9.500V11.500H1.500ZM1 5.500H9.500" />
    <path d="M3 10L5 8L6 9L8 7.500" stroke="#d02020" />
  </svg>],
  ["전체화면", strokeIcon("M1.500 4V1.500H4M9 1.500H11.500V4M11.500 8V10.500H9M4 10.500H1.500V8M4 4.500H9V7.500H4ZM2 2L4 4M11 2L9 4M2 10L4 8M11 10L9 8")],
];

const ChartArea = () => (
  <ChartPanel>
    <QuoteRow>
      <PinkQuotes>
        <Quote $w={56} $bold $c="#d80000">4,845</Quote>
        <Quote $w={72} $bold $c="#d80000">▲385</Quote>
        <Quote $w={63} $bold $c="#d80000">+8.63%</Quote>
        <Quote $w={87}>1,155,961</Quote>
      </PinkQuotes>
      <QuoteName $w={22}>시</QuoteName>
      <Quote $w={71} $pad={20} $c={BLUE}>4,400</Quote>
      <QuoteName $w={22}>고</QuoteName>
      <Quote $w={71} $pad={20} $c="#d80000">5,470</Quote>
      <QuoteName $w={22}>저</QuoteName>
      <Quote $w={71} $pad={20} $c={BLUE}>4,370</Quote>
      <QuoteName $w={58}>체결강도</QuoteName>
      <Quote $w={41} $c={BLUE}>80.33</Quote>
      <QuoteTools>
        <span><Mono>[일]</Mono></span>
        <Btn $w={20} aria-label="차트 설정"><Gear s={11} /></Btn>
        <TradeBtn $c="#d03030">매수</TradeBtn>
        <TradeBtn $c="#2048d8">매도</TradeBtn>
        <SmallBtns>
          <SmallBtn aria-label="최대화"><Tiny g="box" /></SmallBtn>
          <SmallBtn aria-label="닫기"><Tiny g="x" /></SmallBtn>
        </SmallBtns>
      </QuoteTools>
    </QuoteRow>
    <Stage>
      <ChartDrawing />
      <Legend $top={1}>
        {priceKeys.map(([t, c]) => (
          <Key key={t} $c={c} $bold={t === "라닉스"}><Mono>{t}</Mono></Key>
        ))}
      </Legend>
      <Legend $top={587}>
        <Key $c="#000"><Mono>거래량</Mono></Key>
        <Key $c="#50a000"><Mono>거래이평 5</Mono></Key>
        <Key $c="#2080e0"><Mono>20</Mono></Key>
        <Key $c={BLUE}><Mono>60</Mono></Key>
        <Key $c="#802050"><Mono>120</Mono></Key>
      </Legend>
      <Legend $top={645}>
        <Key $c="#ff6800"><Mono>MACD(12,26,9,c)</Mono></Key>
        <Key $c="#2f6cff"><Mono>Signal</Mono></Key>
        <Key $c="#ff98c8"><Mono>MACD Osc</Mono></Key>
      </Legend>
      <PaneTools top={-1} left={["L", "I", "R"]} right={["box"]} />
      <PaneTools top={585} left={["L", "I"]} right={["box", "x"]} />
      <PaneTools top={643} left={["L", "I"]} right={["box", "x"]} />
    </Stage>
    <BottomRow>
      <ScrollBtn $w={17} aria-label="왼쪽으로"><Tri dir="left" /></ScrollBtn>
      <ScrollTrack>
        <ScrollBtn $w={50} aria-label="스크롤 위치" />
      </ScrollTrack>
      <ScrollBtn $w={17} aria-label="오른쪽으로"><Tri dir="right" /></ScrollBtn>
      <Playback>
        <IconCell aria-label="처음">{strokeIcon("M3 3V11M9.500 4V10L6 7Z")}</IconCell>
        <IconCell aria-label="일시정지">{strokeIcon("M4.500 3V11M8.500 3V11M5.500 3V11M9.500 3V11")}</IconCell>
        <IconCell aria-label="끝">{strokeIcon("M10 3V11M3.500 4V10L7 7Z")}</IconCell>
      </Playback>
      <Zoom type="range" aria-label="확대 비율" defaultValue={4} />
      {bottomIcons.map(([name, icon, on]) => (
        <IconCell key={name} aria-label={name} $on={on}>{icon}</IconCell>
      ))}
    </BottomRow>
  </ChartPanel>
);

/* ---------- right tool strip ---------- */

const Strip = styled.nav`
  display: flex;
  flex-direction: column;
  align-items: center;
  border: 1px solid #c8c8c8;
  background: #fafafa;
`;
const StripBtn = styled.button<{ $on?: boolean; $line?: boolean }>`
  width: ${(p) => (p.$on ? 22 : 26)}px;
  height: ${(p) => (p.$on ? 20 : p.$line ? 23 : 22)}px;
  margin: ${(p) => (p.$on ? 1 : 0)}px 0;
  display: grid;
  place-items: center;
  border: ${(p) => (p.$on ? "1px solid #b0b0b0" : "0")};
  border-bottom: ${(p) => (p.$on || p.$line) && "1px solid #c0c0c0"};
  border-radius: ${(p) => (p.$on ? 3 : 0)}px;
  background: ${(p) => (p.$on ? "#ececec" : "none")};
  color: #444;
`;
const Draw = ({ d, children }: { d: string; children?: React.ReactNode }) => (
  <svg width="20" height="16" viewBox="-2 0 20 16" fill="none" stroke="#444" aria-hidden="true">
    <path d={d} />
    {children}
  </svg>
);
const PEN = "M8 8L10 7.500L14 12L12 14L8 10ZM9.500 9.500L12 12";
const LENS = "M6.500 4.500A3.500 3.500 0 1 1 6.400 4.500M9 11L12 14";

const ToolText = styled.text`
  font: 400 7px "Liberation Sans", sans-serif;
  fill: #222;
  stroke: none;
`;

const tools: [string, React.ReactNode][] = [
  ["새로고침", <Repeat size={12} strokeWidth={1.7} />],
  ["설정", <Gear s={11} />],
  ["원", <Circle size={12} strokeWidth={1.7} />],
  ["지표 차트", <Draw d="M2.500 2V13.500H13M4.500 13V9.500H6.500V13M8 13V7.500H10V13M11.500 13V8.500H13V13M3 7L6 4L8 6L12 2" />],
  ["십자 그리기", <Draw d={"M1 5.500H9M4.500 1V9" + PEN} />],
  ["수평선", <Draw d={"M1 4.500H7" + PEN} />],
  ["수직선", <Draw d={"M4.500 1V8" + PEN} />],
  ["추세선", <Draw d="M2 13L14 3" />],
  ["자동 추세선", <Draw d="M6 8L12 1"><ToolText x="-1" y="15">AUTO</ToolText></Draw>],
  ["텍스트", <Draw d="M2.500 6V4.500H9.500V6M6 4.500V13.500M4 13.500H8M10 3.500H15M12.500 1V6" />],
  ["모두 지우기", <Draw d="M6 10L9 7.500H14L12 10ZM6 10V13H12V10M12 13L14 10.500V7.500"><ToolText x="1" y="6">All</ToolText></Draw>],
  ["봉", <Draw d="M5 3V13M11 2V12"><path d="M3 5H7V11H3ZM9 4H13V10H9Z" fill="#444" /></Draw>],
  ["정보 보기", <Draw d={LENS + "M13.500 3V4M13.500 5V9"} />],
  ["목록 보기", <Draw d={LENS + "M11 1.500H15M11 3.500H15M11 5.500H15"} />],
  ["패턴 검색", <Draw d="M2 6L6 2L9 5L13 1M2 8.500H6M2 11H5M2 13.500H5M10 6.500A3 3 0 1 1 9.900 6.500M12 12L14 14" />],
  ["파동", <Draw d="M2.500 14V8L5 11L8 7L11 11L13.500 7V14M5 7V2L3.500 4M5 2L6.500 4M10 2V7L8.500 5M10 7L11.500 5" />],
  ["구간", <Draw d="M3 2.500H14M3 8.500H14M2 13.500H13M4 13L13 3" />],
  ["격자", <Draw d="M2.500 2V14M7.500 2V14M10.500 2V14M13.500 2V14" />],
  ["등간격", <Draw d="M2.500 2V14M6.500 2V14M10.500 2V14M13.500 2V14" />],
  ["실행 취소", <RotateCcw size={12} strokeWidth={1.7} />],
  ["다시 실행", <RotateCw size={12} strokeWidth={1.7} />],
  ["확대경", <Search size={12} strokeWidth={1.7} />],
];

const ToolStrip = () => (
  <Strip>
    {tools.map(([name, icon], i) => (
      <StripBtn key={name} aria-label={name} $on={name === "정보 보기"} $line={i === 1}>
        {icon}
      </StripBtn>
    ))}
  </Strip>
);

const LIGHT = "#c4c8bc";

export default function App() {
  return (
    <Window>
      <Global />
      <Inner>
        <TitleBar>
          <Tag $bg="#c06808">1</Tag>
          <Tag $bg="#989898">?</Tag>
          <Title>[9590] 종합차트</Title>
          <TitleBtn aria-label="분리">
            {strokeIcon("M1 1L4 4M1.500 4V1.500H4M6 2.500H12.500V12.500H3.500V6M6 4.500H12.500M9.500 2V4", 14, LIGHT)}
          </TitleBtn>
          <TitleBtn aria-label="복사">
            {strokeIcon("M4.500 3V1.500H12.500V9.500H11M1.500 4.500H10.500V12.500H1.500ZM1 5.500H11M3.500 8L5.500 10.500L8.500 7", 14, LIGHT)}
          </TitleBtn>
          <TitleBtn aria-label="화면 저장"><Camera size={14} strokeWidth={1.7} /></TitleBtn>
          <TitleBtn aria-label="화면 설정"><Gear s={12} c={LIGHT} thin /></TitleBtn>
          <TitleBtn aria-label="최소화">{strokeIcon("M1 11H11", 12, LIGHT, 2)}</TitleBtn>
          <TitleBtn aria-label="최대화">{strokeIcon("M1 2H11V10H1Z", 12, LIGHT, 2)}</TitleBtn>
          <TitleBtn aria-label="닫기">{strokeIcon("M1 1L11 11M11 1L1 11", 12, LIGHT, 2)}</TitleBtn>
        </TitleBar>
        <Toolbars>
          <MainToolbar />
          <ChartToolbar />
        </Toolbars>
        <Body>
          <SidePanel />
          <ChartArea />
          <ToolStrip />
        </Body>
      </Inner>
    </Window>
  );
}
